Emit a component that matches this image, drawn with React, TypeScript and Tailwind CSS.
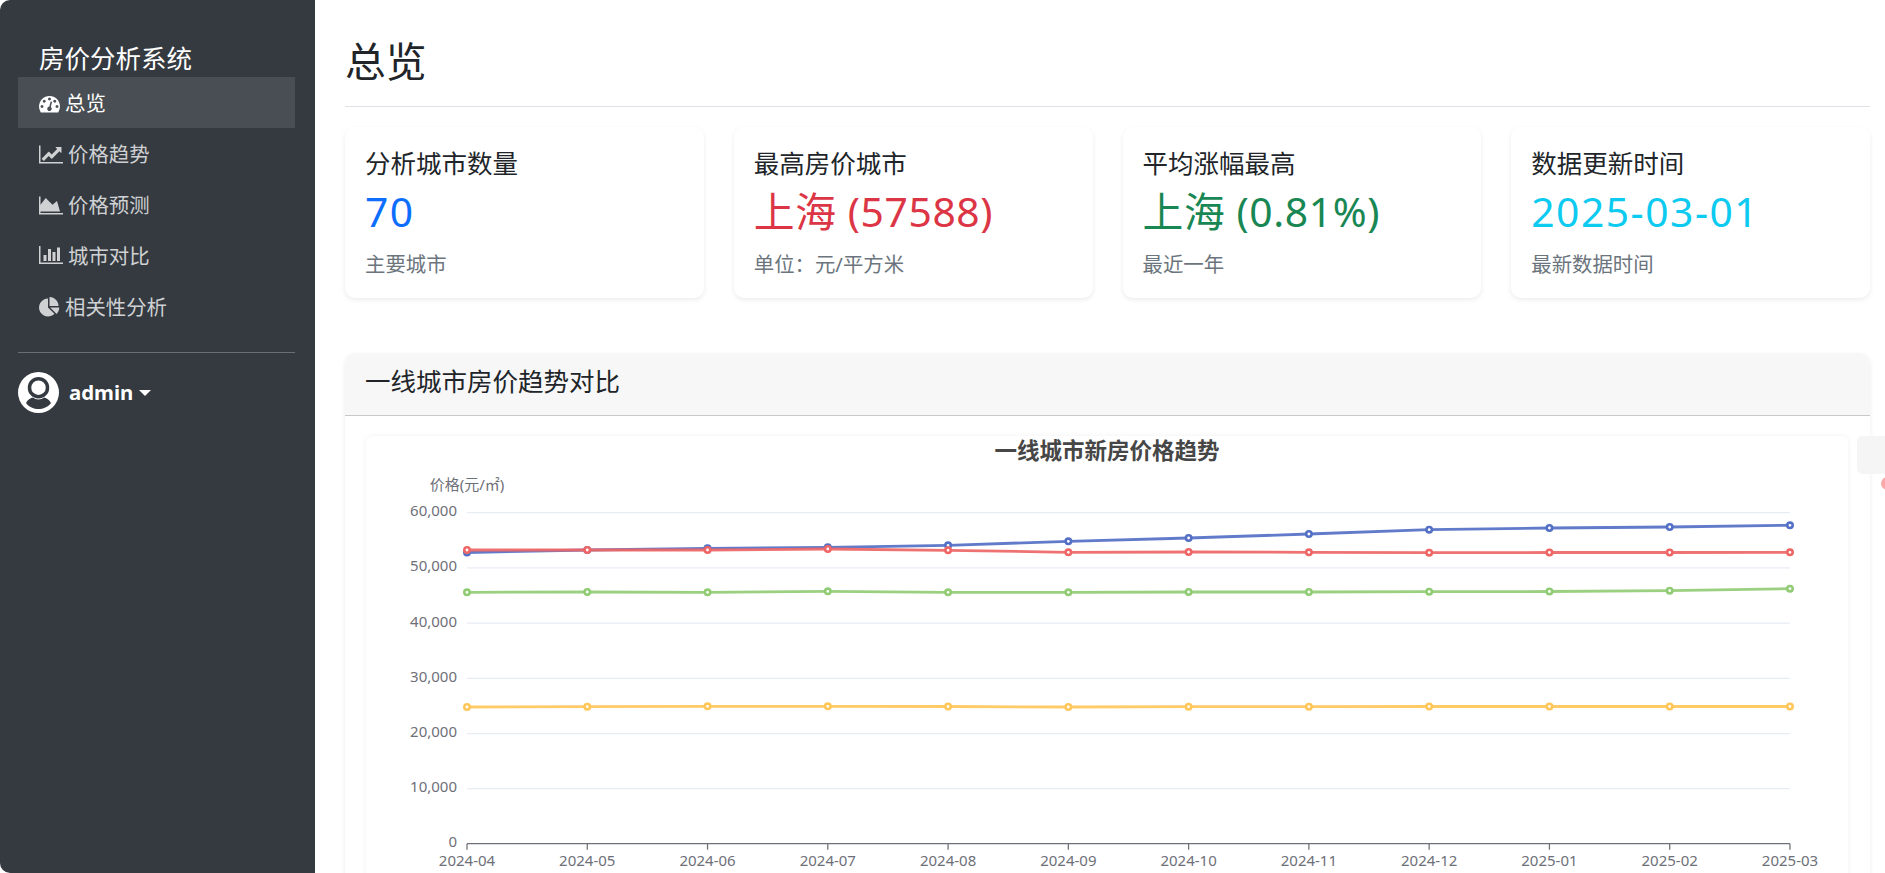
import React from 'react';

const navItems = [
  {
    label: '总览',
    active: true,
    vb: '0 0 1792 1792',
    w: 21,
    d: 'M384 1152q0-53-37.5-90.5t-90.5-37.5-90.5 37.5-37.5 90.5 37.5 90.5 90.5 37.5 90.5-37.5 37.5-90.5zm192-448q0-53-37.5-90.5t-90.5-37.5-90.5 37.5-37.5 90.5 37.5 90.5 90.5 37.5 90.5-37.5 37.5-90.5zm428 481l101-382q6-26-7.5-48.5t-38.5-29.5-48 6.5-30 39.5l-101 382q-60 5-107 43.5t-63 98.5q-20 77 20 146t117 89 146-20 89-117q16-60-6-117t-72-91zm660-33q0-53-37.5-90.5t-90.5-37.5-90.5 37.5-37.5 90.5 37.5 90.5 90.5 37.5 90.5-37.5 37.5-90.5zm-640-640q0-53-37.5-90.5t-90.5-37.5-90.5 37.5-37.5 90.5 37.5 90.5 90.5 37.5 90.5-37.5 37.5-90.5zm448 192q0-53-37.5-90.5t-90.5-37.5-90.5 37.5-37.5 90.5 37.5 90.5 90.5 37.5 90.5-37.5 37.5-90.5zm320 448q0 261-141 483-19 29-54 29h-1402q-35 0-54-29-141-221-141-483 0-182 71-348t191-286 286-191 348-71 348 71 286 191 191 286 71 348z',
  },
  {
    label: '价格趋势',
    vb: '0 0 2048 1792',
    w: 24,
    d: 'M2048 1536v128h-2048v-1536h128v1408h1920zm-128-1248v435q0 21-19.5 29.5t-35.5-7.5l-121-121-633 633q-10 10-23 10t-23-10l-233-233-416 416-192-192 585-585q10-10 23-10t23 10l233 233 464-464-121-121q-16-16-7.5-35.5t29.5-19.5h435q14 0 23 9t9 23z',
  },
  {
    label: '价格预测',
    vb: '0 0 2048 1792',
    w: 24,
    d: 'M2048 1536v128h-2048v-1536h128v1408h1920zm-512-1024l256 896h-1664v-576l448-576 576 576z',
  },
  {
    label: '城市对比',
    vb: '0 0 2048 1792',
    w: 24,
    d: 'M640 768v512h-256v-512h256zm384-512v1024h-256v-1024h256zm1024 1152v128h-2048v-1536h128v1408h1920zm-640-896v768h-256v-768h256zm384-384v1152h-256v-1152h256z',
  },
  {
    label: '相关性分析',
    vb: '0 0 1792 1792',
    w: 21,
    d: 'M768 890l546 546q-106 108-247.5 168t-298.5 60q-209 0-385.5-103t-279.5-279.5-103-385.5 103-385.5 279.5-279.5 385.5-103v762zm187 6h773q0 157-60 298.5t-168 247.5zm709-128h-768v-768q209 0 385.5 103t279.5 279.5 103 385.5z',
  },
];

const stats = [
  { title: '分析城市数量', value: '70', color: 'text-[#0d6efd] tracking-[1.5px]', note: '主要城市' },
  { title: '最高房价城市', value: '上海 (57588)', color: 'text-[#dc3545] tracking-[0.6px]', note: '单位：元/平方米' },
  { title: '平均涨幅最高', value: '上海 (0.81%)', color: 'text-[#198754] tracking-[0.6px]', note: '最近一年' },
  { title: '数据更新时间', value: '2025-03-01', color: 'text-[#0dcaf0] tracking-[1.5px]', note: '最新数据时间' },
];

const months = [
  '2024-04', '2024-05', '2024-06', '2024-07', '2024-08', '2024-09',
  '2024-10', '2024-11', '2024-12', '2025-01', '2025-02', '2025-03',
];

// y positions read off the reference, relative to the chart card
const series = [
  { color: '#5470c6', ys: [116.5, 114, 112.3, 111.3, 109.3, 105.3, 102, 98, 93.7, 92, 91, 89.3] },
  { color: '#91cc75', ys: [156.3, 156, 156.3, 155.3, 156.3, 156.3, 156, 156, 155.7, 155.5, 154.7, 152.7] },
  { color: '#ffc75a', ys: [271, 270.7, 270.3, 270.3, 270.5, 271, 270.7, 270.7, 270.5, 270.5, 270.5, 270.5] },
  { color: '#ee6666', ys: [114, 114, 114, 113, 114.3, 116.3, 116, 116.3, 116.7, 116.5, 116.5, 116.3] },
];

const gridYs = [
  { y: 76.7, label: '60,000' },
  { y: 131.9, label: '50,000' },
  { y: 187.1, label: '40,000' },
  { y: 242.3, label: '30,000' },
  { y: 297.5, label: '20,000' },
  { y: 352.7, label: '10,000' },
];

const xAt = (i: number) => 101 + i * 120.27;
const axisY = 407.7;

const TrendChart: React.FC = () => (
  <svg width="1482" height="470" className="block">
    <text x="741" y="23" textAnchor="middle" fontSize="22.5" fontWeight="700" fill="#464646">
      一线城市新房价格趋势
    </text>
    <text x="101" y="54" textAnchor="middle" fontSize="15" fill="#6e7079">
      价格(元/㎡)
    </text>
    {gridYs.map((g) => (
      <g key={g.label}>
        <line x1="101" x2="1424" y1={g.y} y2={g.y} stroke="#e0e6f1" strokeOpacity="0.75" strokeWidth="1.25" />
        <text x="91" y={g.y + 3.5} textAnchor="end" fontSize="15" fill="#6e7079">
          {g.label}
        </text>
      </g>
    ))}
    <text x="91" y={axisY + 3.5} textAnchor="end" fontSize="15" fill="#6e7079">
      0
    </text>
    <line x1="101" x2="1424" y1={axisY} y2={axisY} stroke="#6e7079" strokeWidth="1.25" />
    {months.map((m, i) => (
      <g key={m}>
        <line x1={xAt(i)} x2={xAt(i)} y1={axisY} y2={axisY + 6} stroke="#6e7079" strokeWidth="1.25" />
        <text x={xAt(i)} y={axisY + 22} textAnchor="middle" fontSize="15" fill="#6e7079">
          {m}
        </text>
      </g>
    ))}
    {series.map((s) => (
      <g key={s.color}>
        <polyline
          points={s.ys.map((y, i) => `${xAt(i)},${y}`).join(' ')}
          fill="none"
          stroke={s.color}
          strokeWidth="2.8"
          strokeOpacity="0.92"
        />
        {s.ys.map((y, i) => (
          <circle key={i} cx={xAt(i)} cy={y} r="2.7" fill="#fff" stroke={s.color} strokeWidth="2.6" />
        ))}
      </g>
    ))}
  </svg>
);

const App: React.FC = () => {
  return (
    <div className="flex h-screen overflow-hidden bg-white font-['Noto_Sans','Noto_Sans_CJK_SC',sans-serif] text-[20.4px] text-[#212529]">
      <aside className="w-[315px] shrink-0 rounded-l-[10px] bg-[#343a40] pl-[18px] pr-5 pt-[43px]">
        <h4 className="mb-1 pl-[21px] text-[25.5px] leading-[30px] text-white">房价分析系统</h4>
        <nav className="flex flex-col">
          {navItems.map((item) => (
            <a
              key={item.label}
              className={`flex h-[51px] items-center gap-[5px] px-[21px] pt-[2px] ${
                item.active ? 'bg-[#484e53] text-white' : 'text-[#cfd1d3]'
              }`}
            >
              <svg viewBox={item.vb} width={item.w} height="21" fill="currentColor" className="shrink-0">
                <path d={item.d} />
              </svg>
              {item.label}
            </a>
          ))}
        </nav>
        <hr className="mt-[20px] border-t border-[#6b6f73]" />
        <div className="mt-[19px] flex items-center text-white">
          <svg viewBox="0 0 41 41" width="41" height="41" className="shrink-0">
            <circle cx="20.5" cy="20.5" r="20.5" fill="#fff" />
            <circle cx="20.5" cy="15.7" r="9" fill="#fff" stroke="#343a40" strokeWidth="3.5" />
            <path d="M8 31 C10 27 13 26 15 25.5 C18 28 23 28 26 25.5 C28 26 31 27 33 31 C30 35 25 37 20.5 37 C16 37 11 35 8 31 Z" fill="#343a40" />
          </svg>
          <span className="ml-[10px] font-bold">admin</span>
          <span className="ml-[6px] h-0 w-0 border-x-[6px] border-t-[6px] border-x-transparent border-t-white" />
        </div>
      </aside>

      <main className="min-w-0 flex-1 pl-[30px] pr-[15px]">
        <h1 className="flex h-[107px] items-center border-b border-[#dee2e6] pt-4 text-[40.8px] leading-[48px]">总览</h1>

        <div className="mt-5 grid grid-cols-4 gap-[30px]">
          {stats.map((s) => (
            <div key={s.title} className="h-[171px] rounded-[10px] bg-white p-5 shadow-[0_2px_5px_rgba(0,0,0,0.08)]">
              <h5 className="mb-[9px] pt-px text-[25.5px] leading-[30px]">{s.title}</h5>
              <h2 className={`mb-[13px] text-[40.8px] leading-[48px] ${s.color}`}>{s.value}</h2>
              <p className="pt-px leading-[30px] text-[#6c757d]">{s.note}</p>
            </div>
          ))}
        </div>

        <div className="mt-[55px] rounded-[10px] bg-white shadow-[0_2px_5px_rgba(0,0,0,0.08)]">
          <div className="flex h-[63px] items-center rounded-t-[10px] border-b border-[#c8c8c8] bg-[#f7f7f7] px-5 pb-[6px] text-[25.5px]">
            一线城市房价趋势对比
          </div>
          <div className="flex gap-[9px] py-5 pl-[21px]">
            <div className="w-[1482px] shrink-0 rounded-[6px] bg-white shadow-[0_0_5px_rgba(0,0,0,0.06)]">
              <TrendChart />
            </div>
            <div className="w-[120px] shrink-0">
              <div className="h-[38px] rounded-[5px] bg-[#f5f5f5]" />
              <div className="ml-6 mt-[3px] h-[13px] w-[13px] rounded-full bg-[#f9a9a9]" />
            </div>
          </div>
        </div>
      </main>
    </div>
  );
};

export default App;
